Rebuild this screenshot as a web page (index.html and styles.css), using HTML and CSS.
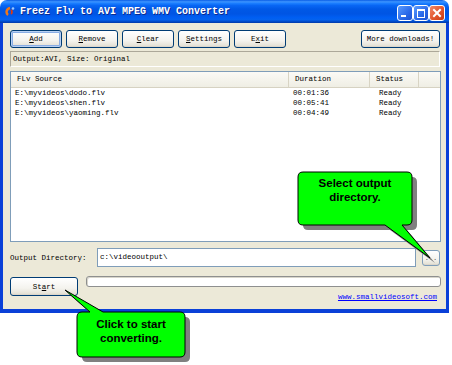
FILE: index.html
```html
<!DOCTYPE html>
<html lang="en">
<head>
<meta charset="UTF-8">
<title>Freez Flv to AVI MPEG WMV Converter</title>
<link rel="stylesheet" href="styles.css">
</head>
<body>
    <div class="window">
        <div class="titlebar">
            <svg class="app-icon" width="10" height="11" viewBox="0 0 10 11">
                <path d="M5 2 A4 4 0 0 0 3 9" stroke="#f07818" stroke-width="2.4" fill="none"/>
                <path d="M6 4 A2.5 2.5 0 0 1 6 8" stroke="#e23a10" stroke-width="1.8" fill="none"/>
                <circle cx="8" cy="2.5" r="1.3" fill="#9cc8ff"/>
            </svg>
            <span class="title">Freez Flv to AVI MPEG WMV Converter</span>
            <div class="caps">
                <span class="cap cap-min"><i></i></span>
                <span class="cap cap-max"><i></i></span>
                <span class="cap cap-close">
                    <svg width="14" height="14" viewBox="0 0 14 14"><path d="M4 4 L10 10 M10 4 L4 10" stroke="#fff" stroke-width="2" stroke-linecap="square"/></svg>
                </span>
            </div>
        </div>

        <div class="client">
            <div class="toolbar">
                <button class="btn focused"><u>A</u>dd</button>
                <button class="btn"><u>R</u>emove</button>
                <button class="btn"><u>C</u>lear</button>
                <button class="btn"><u>S</u>ettings</button>
                <button class="btn">E<u>x</u>it</button>
                <button class="btn more">More downloads!</button>
            </div>

            <div class="info">Output:AVI, Size: Original</div>

            <div class="list">
                <div class="list-head">
                    <span class="col-src">FLv Source</span>
                    <span class="col-dur">Duration</span>
                    <span class="col-st">Status</span>
                    <span class="col-fill"></span>
                </div>
                <div class="list-row">
                    <span class="col-src">E:\myvideos\dodo.flv</span>
                    <span class="col-dur">00:01:36</span>
                    <span class="col-st">Ready</span>
                </div>
                <div class="list-row">
                    <span class="col-src">E:\myvideos\shen.flv</span>
                    <span class="col-dur">00:05:41</span>
                    <span class="col-st">Ready</span>
                </div>
                <div class="list-row">
                    <span class="col-src">E:\myvideos\yaoming.flv</span>
                    <span class="col-dur">00:04:49</span>
                    <span class="col-st">Ready</span>
                </div>
            </div>

            <div class="dir-row">
                <span class="dir-label">Output Directory:</span>
                <div class="field">c:\videooutput\</div>
                <button class="btn browse">...</button>
            </div>

            <div class="bottom">
                <button class="btn start">St<u>a</u>rt</button>
                <div class="progress"></div>
                <a class="link" href="#">www.smallvideosoft.com</a>
            </div>
        </div>
    </div>

    <!-- help callouts drawn over the window -->
    <svg class="callouts" width="452" height="365" viewBox="0 0 452 365">
        <g fill="#808080" transform="translate(5 5)">
            <path d="M303 172 H407 Q412 172 412 177 V220 Q412 225 407 225 H402 L430 258 L385 225 H303 Q298 225 298 220 V177 Q298 172 303 172 Z"/>
            <path d="M82 312 H90 L65 290 L103 312 H180 Q185 312 185 317 V352 Q185 357 180 357 H82 Q77 357 77 352 V317 Q77 312 82 312 Z"/>
        </g>
        <g fill="#00ff00" stroke="#000" stroke-width="1">
            <path d="M303 172 H407 Q412 172 412 177 V220 Q412 225 407 225 H402 L430 258 L385 225 H303 Q298 225 298 220 V177 Q298 172 303 172 Z"/>
            <path d="M82 312 H90 L65 290 L103 312 H180 Q185 312 185 317 V352 Q185 357 180 357 H82 Q77 357 77 352 V317 Q77 312 82 312 Z"/>
        </g>
    </svg>
    <div class="callout-text tip-dir">Select output<br>directory.</div>
    <div class="callout-text tip-start">Click to start<br>converting.</div>
</body>
</html>
```

FILE: styles.css
```css
body {
    margin: 0;
    background-color: #fff;
    position: relative;
    width: 452px;
    height: 365px;
    overflow: hidden;
    font-family: "Liberation Mono", "DejaVu Sans Mono", monospace;
    font-size: 7.5px;
    color: #000;
}

.window {
    width: 449px;
    height: 313px;
    display: flex;
    flex-direction: column;
}

.titlebar {
    height: 23px;
    flex: none;
    display: flex;
    align-items: center;
    padding: 0 4px 0 5px;
    border-radius: 7px 7px 0 0;
    background: linear-gradient(#0a5de6 0%, #3d95ff 8%, #1c7fff 14%, #0866f4 24%, #0058e6 40%, #0055e4 60%, #005ef2 76%, #0462ee 86%, #0049c6 94%, #0038a8 100%);
}

.app-icon {
    flex: none;
    margin-right: 5px;
}

.title {
    flex: 1;
    color: #fff;
    font-weight: bold;
    font-size: 10px;
    text-shadow: 1px 1px 0 #0c2a8e;
    white-space: nowrap;
}

.caps {
    display: flex;
    align-self: flex-start;
    margin-top: 5px;
}

.cap {
    width: 16px;
    height: 16px;
    box-sizing: border-box;
    border: 1px solid #fff;
    border-radius: 3px;
    position: relative;
    display: flex;
    align-items: center;
    justify-content: center;
    background: linear-gradient(135deg, #5a9cff, #2a68e8 60%, #1c52d2);
}

.cap-min i {
    position: absolute;
    left: 3px;
    bottom: 3px;
    width: 5px;
    height: 2px;
    background: #fff;
}

.cap-max i {
    width: 6px;
    height: 6px;
    border: 1px solid #fff;
    border-top-width: 2px;
}

.cap-close {
    background: linear-gradient(135deg, #f08868, #e2552c 55%, #c83c12);
}

.client {
    flex: 1;
    display: flex;
    flex-direction: column;
    background-color: #ece9d8;
    border: 3px solid #0a40d8;
    border-top: 0;
    border-bottom-width: 4px;
    padding: 7px 6px 0 7px;
}

.btn {
    font-family: inherit;
    font-size: 7.5px;
    color: #000;
    height: 18px;
    width: 52px;
    padding: 0;
    border: 1px solid #003c74;
    border-radius: 3px;
    background: linear-gradient(#ffffff, #f4f3ee 60%, #e6e3d8 90%, #d6d0c5);
}

.btn.focused {
    box-shadow: inset 0 0 0 1px #b8d0f2, inset 0 0 0 2px #89ade4;
}

.toolbar {
    display: flex;
    gap: 4px;
}

.btn.more {
    width: 79px;
    margin-left: auto;
}

.info {
    margin-top: 3px;
    height: 16px;
    box-sizing: border-box;
    border: 1px solid;
    border-color: #aca899 #fff #fff #aca899;
    padding-left: 2px;
    line-height: 14px;
}

.list {
    margin-top: 4px;
    margin-right: -1px;
    height: 171px;
    box-sizing: border-box;
    border: 1px solid #7f9db9;
    background-color: #fff;
}

.list-head,
.list-row {
    display: grid;
    grid-template-columns: 278px 81px 49px 1fr;
}

.list-head {
    height: 15px;
    line-height: 14px;
    background: linear-gradient(#fbfaf6, #efeee4);
    border-bottom: 1px solid #d6d2c2;
}

.list-head span {
    border-right: 1px solid #d8d4c4;
}

.list-head .col-fill {
    border-right: 0;
}

.list-head .col-src { padding-left: 6px; }
.list-head .col-dur { padding-left: 6px; }
.list-head .col-st { padding-left: 6px; }

.list-row {
    height: 10px;
    line-height: 10px;
}

.list-row .col-src { padding-left: 4px; }
.list-row .col-dur { padding-left: 4px; }
.list-row .col-st { padding-left: 9px; }

.dir-row {
    margin-top: 6px;
    display: flex;
    align-items: center;
    height: 19px;
}

.dir-label {
    width: 87px;
    flex: none;
}

.field {
    width: 319px;
    height: 19px;
    box-sizing: border-box;
    border: 1px solid #7f9db9;
    background-color: #fff;
    padding-left: 2px;
    line-height: 17px;
}

.btn.browse {
    width: 18px;
    height: 16px;
    margin-left: 6px;
    font-size: 7px;
    color: #555;
    border-color: #7f9db9;
}

.bottom {
    margin-top: 9px;
    display: grid;
    grid-template-columns: 68px 1fr;
    column-gap: 8px;
    align-items: start;
}

.btn.start {
    grid-row: 1 / 3;
    width: 68px;
    height: 19px;
    margin-top: 1px;
}

.progress {
    height: 11px;
    margin-right: -1px;
    box-sizing: border-box;
    border: 1px solid #8e8f8f;
    border-radius: 3px;
    background-color: #fff;
    box-shadow: inset 1px 1px 0 #d8d6cc;
}

.link {
    justify-self: end;
    margin: 6px 3px 0 0;
    line-height: 8px;
    color: #0000ff;
    text-decoration: underline;
}

.callouts {
    position: absolute;
    left: 0;
    top: 0;
}

.callout-text {
    position: absolute;
    font-family: "Liberation Sans", Arial, sans-serif;
    font-weight: bold;
    font-size: 11.5px;
    line-height: 14px;
    text-align: center;
    color: #000;
}

.tip-dir {
    left: 298px;
    top: 176px;
    width: 114px;
}

.tip-start {
    left: 77px;
    top: 317px;
    width: 108px;
}
```
